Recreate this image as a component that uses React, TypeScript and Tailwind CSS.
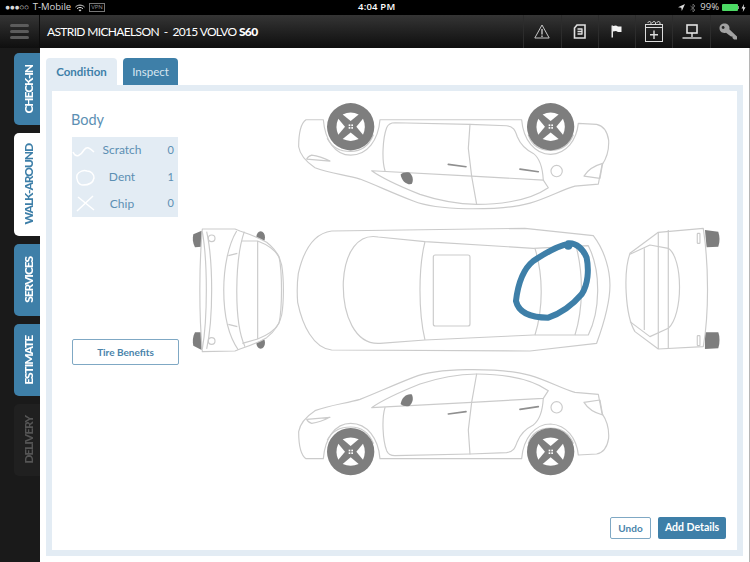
import React from "react";

const LINE = "#cbcbcb";
const GREY = "#7e7e7e";

function Wheel({ x, y }: { x: number; y: number }) {
  return (
    <g transform={`translate(${x} ${y})`}>
      <circle r="71" fill={GREY} stroke="none" />
      {[0, 90, 180, 270].map((a) => (
        <path key={a} transform={`rotate(${a})`} d="M-24 -37 Q0 -48 24 -37 L0 -17 Z" fill="#fff" stroke="none" />
      ))}
      {[-6, 2].flatMap((a) =>
        [-6, 2].map((b) => <rect key={`${a}${b}`} x={a} y={b} width="5" height="5" fill="#fff" stroke="none" />)
      )}
    </g>
  );
}

function SideCar() {
  return (
    <g fill="none" stroke={LINE} strokeWidth="3.5" strokeLinejoin="round" strokeLinecap="round">
      <path d="M130 296 L78 296 C62 285 56 250 56 215 C60 190 75 172 105 152 C150 135 200 130 240 118 C280 103 340 75 400 52 C440 36 500 30 560 29 C640 28 700 32 750 46 C800 60 850 88 885 97 L955 103 L966 160 C980 180 988 200 986 235 C982 260 970 278 950 282 L895 285 C890 235 860 195 812 192 C765 192 730 235 725 296 L300 296 C295 235 262 190 212 190 C165 190 135 235 130 296 Z" />
      <path d="M142 240 C155 215 180 201 212 201 C245 201 268 220 280 250" />
      <path d="M745 250 C755 220 780 204 812 204 C845 204 868 220 880 250" />
      <path d="M275 143 L575 127 L790 115 L805 92 C780 75 740 58 690 50 C650 43 620 42 590 42 C540 43 480 52 420 72 C370 92 310 118 275 143 Z" />
      <path d="M315 143 C305 175 308 240 320 272 C325 284 335 287 345 287 L570 282 L680 278 C700 276 705 265 712 245 C720 225 740 205 760 195 C780 180 788 150 790 115" />
      <path d="M590 42 L575 127 L565 210 L570 282" />
      <circle cx="830" cy="142" r="17" />
      <path d="M80 178 L150 172 C130 182 110 188 95 190 C88 188 82 183 80 178 Z" />
      <path d="M912 127 L960 120 L968 165 C950 160 925 148 912 127 Z" />
      <path d="M505 162 L558 155" stroke="#8f8f8f" strokeWidth="5" />
      <path d="M720 148 L775 140" stroke="#8f8f8f" strokeWidth="5" />
      <path d="M362 132 C365 112 380 100 395 103 C402 115 398 130 388 138 C378 140 368 138 362 132 Z" fill={GREY} stroke="none" />
      <Wheel x={212} y={275} />
      <Wheel x={812} y={275} />
    </g>
  );
}

function CarDiagram() {
  return (
    <svg viewBox="185 95 550 395" width="550" height="395" className="block shrink-0 blur-[0.4px]">
      <g transform="translate(280 218.4) scale(0.3333 -0.3333)">
        <SideCar />
      </g>
      <g transform="translate(280 360) scale(0.3333)">
        <SideCar />
      </g>
      <g transform="translate(185 215) scale(0.3333)" fill="none" stroke={LINE} strokeWidth="3.5" strokeLinejoin="round">
        <path d="M25 58 L50 47 L50 95 L30 97 C23 85 22 70 25 58 Z" fill={GREY} stroke="none" />
        <path d="M25 392 L50 405 L50 352 L30 352 C23 365 22 380 25 392 Z" fill={GREY} stroke="none" />
        <ellipse cx="227" cy="67" rx="13" ry="18" fill={GREY} stroke="none" />
        <ellipse cx="227" cy="383" rx="13" ry="18" fill={GREY} stroke="none" />
        <path d="M52 42 L150 42 L165 48 C195 58 225 70 245 82 C268 100 285 125 290 150 C297 190 297 260 290 300 C285 325 268 350 245 368 C225 380 195 392 165 402 L150 408 L52 410 C42 300 42 150 52 42 Z" fill="#fff" />
        <path d="M65 50 C85 140 85 310 65 402" />
        <path d="M52 50 C68 140 68 310 52 402" />
        <circle cx="80" cy="70" r="10" />
        <circle cx="80" cy="378" r="10" />
        <path d="M155 48 C105 130 100 320 160 405" />
        <path d="M178 50 C150 130 145 320 180 395" />
        <path d="M170 78 L218 78 C250 90 270 105 282 125 C292 170 292 280 282 325 C270 345 250 360 218 372 L172 385" />
        <path d="M218 78 L218 372" />
        <path d="M130 122 L157 115 M130 328 L157 335" />
        <path d="M440 48 L1020 40 L1225 62 C1262 110 1275 170 1275 210 C1275 260 1255 330 1235 385 L1035 408 L440 405 C385 400 352 330 338 262 C336 235 336 205 340 175 C355 110 385 55 440 48 Z" />
        <path d="M580 66 C520 55 480 110 475 200 C472 300 510 390 585 385 L720 375 L1045 360 L1210 360 C1245 290 1250 170 1210 92 L1045 100 L720 80 Z" />
        <path d="M720 80 C700 160 700 290 720 375" />
        <path d="M1050 100 C1075 180 1075 280 1050 360" />
        <path d="M1175 100 C1195 180 1195 280 1170 360" />
        <rect x="745" y="120" width="110" height="213" rx="6" />
        <path d="M1560 45 L1600 50 C1605 65 1605 80 1600 95 L1565 97 Z" fill={GREY} stroke="none" />
        <path d="M1560 352 L1600 352 C1605 365 1605 385 1600 400 L1560 402 Z" fill={GREY} stroke="none" />
        <path d="M1420 52 L1555 40 C1572 150 1572 300 1555 395 L1420 402 L1350 350 C1320 300 1315 170 1335 115 Z" fill="#fff" />
        <path d="M1420 52 L1420 402 M1450 45 L1450 400 M1378 100 L1378 345" />
        <path d="M1335 118 L1395 90 L1450 100 C1495 130 1495 300 1450 340 L1395 365 L1335 320" />
        <rect x="1537" y="55" width="8" height="30" rx="2" />
        <rect x="1537" y="362" width="8" height="30" rx="2" />
        <path
          d="M1155 86 C1130 88 1090 108 1045 138 C1020 158 1000 198 993 258 C1000 288 1030 308 1090 308 C1120 298 1160 273 1190 238 C1210 208 1212 163 1205 128 C1195 103 1175 83 1150 85"
          stroke="#3e7fa8"
          strokeWidth="18"
          strokeLinecap="round"
        />
        <circle cx="1150" cy="92" r="12" fill="#3e7fa8" stroke="none" />
      </g>
    </svg>
  );
}

function SideTab({ label, tone }: { label: string; tone: "blue" | "white" | "dark" }) {
  const styles =
    tone === "white"
      ? "h-[103px] bg-white text-[#3e7fa8]"
      : tone === "blue"
        ? "h-[72px] bg-[#3e7fa8] text-white"
        : "h-[72px] bg-[#202020] text-[#555555]";
  return (
    <div className={`${styles} flex w-[26px] items-center justify-center rounded-l-[5px] pl-[4px]`}>
      <span className="rotate-180 text-[12px] leading-none font-black tracking-[-1.1px] [writing-mode:vertical-rl]">
        {label}
      </span>
    </div>
  );
}

function HeaderCell({ children }: { children: React.ReactNode }) {
  return (
    <div className="flex h-full w-[37.3px] items-center justify-center border-l border-[#2c2c2c]">{children}</div>
  );
}

export default function App() {
  return (
    <div className="flex h-[562px] w-[750px] flex-col overflow-hidden bg-[#1a1a1a] font-['Lato',sans-serif]">
      <div className="relative flex h-[15px] shrink-0 items-center bg-black pr-[4px] pl-[5px] font-['Open_Sans',sans-serif] text-[9.5px] text-[#d8d8d8]">
        <span className="text-[8.5px] tracking-[-0.4px]">●●●○○</span>
        <span className="ml-[4px]">T-Mobile</span>
        <svg width="10" height="8" viewBox="0 0 10 8" className="ml-[4px]" fill="none" stroke="#ddd">
          <path d="M0.5 3 C3 0.5 7 0.5 9.5 3 M2 4.7 C4 3 6 3 8 4.7" />
          <path d="M3.5 6 L5 7.5 L6.5 6 C5.5 5.3 4.5 5.3 3.5 6 Z" fill="#ddd" stroke="none" />
        </svg>
        <span className="ml-[4px] border border-[#777] px-px text-[6px] leading-[7px] text-[#999]">VPN</span>
        <span className="absolute left-[358px] font-semibold tracking-[0.2px] text-white">4:04 PM</span>
        <div className="ml-auto flex items-center">
          <svg width="7" height="7" viewBox="0 0 7 7">
            <path d="M7 0 L0 3.2 L3.3 3.7 L3.8 7 Z" fill="#ddd" />
          </svg>
          <svg width="6" height="10" viewBox="0 0 6 10" className="ml-[5px]" fill="none" stroke="#777" strokeWidth="0.8">
            <path d="M0.5 3 L5 7 L3 9 L3 1 L5 3 L0.5 7" />
          </svg>
          <span className="ml-[4px]">99%</span>
          <div className="ml-[3px] h-[7px] w-[16px] rounded-[1px] bg-[#4cd964]" />
          <div className="h-[3px] w-px bg-[#888]" />
          <svg width="5" height="8" viewBox="0 0 5 8" className="ml-[2px]">
            <path d="M3 0 L0.5 4.5 L2.2 4.5 L1.8 8 L4.5 3.2 L2.7 3.2 Z" fill="#ddd" />
          </svg>
        </div>
      </div>

      <div className="flex h-[33px] shrink-0 items-center bg-gradient-to-b from-[#353535] to-[#0f0f0f]">
        <div className="flex h-full w-10 flex-col items-center justify-center gap-[3.5px] border-r border-[#0c0c0c] pr-[1px]">
          <div className="h-[2.5px] w-[19px] rounded-full bg-[#5c5c5c]" />
          <div className="h-[2.5px] w-[19px] rounded-full bg-[#5c5c5c]" />
          <div className="h-[2.5px] w-[19px] rounded-full bg-[#5c5c5c]" />
        </div>
        <div className="ml-[7px] text-[12px] tracking-[-0.65px] whitespace-pre text-white">
          {"ASTRID MICHAELSON  -  2015 VOLVO "}
          <span className="font-black">S60</span>
        </div>
        <div className="ml-auto flex h-full pr-[3px]">
          <HeaderCell>
            <svg width="16" height="15" viewBox="0 0 16 15" fill="none" stroke="#c8c8c8" strokeWidth="1">
              <path d="M8 1 L15.2 14 L0.8 14 Z" />
              <path d="M8 5 L8 10.5 M8 11.5 L8 13" strokeWidth="1.4" />
            </svg>
          </HeaderCell>
          <HeaderCell>
            <svg width="13" height="15" viewBox="0 0 13 15" fill="none" stroke="#e0e0e0" strokeWidth="1.6">
              <path d="M4 1 L12 1 L12 14 L1.5 14 L1.5 4 Z" />
              <path d="M4.5 5 L9.5 5 M4.5 7.5 L9.5 7.5 M4.5 10 L9.5 10 M9 5 L9 10" strokeWidth="1.3" />
            </svg>
          </HeaderCell>
          <HeaderCell>
            <svg width="11" height="13" viewBox="0 0 11 13">
              <path d="M0.5 0.5 L2 0.5 L2 12.5 L0.5 12.5 Z" fill="#e6e6e6" />
              <path d="M2 1 L5 0.5 L7 1.5 L10.5 1.5 L10.5 7 L7 7 L5 6 L2 6.5 Z" fill="#f2f2f2" />
            </svg>
          </HeaderCell>
          <HeaderCell>
            <svg width="18" height="21" viewBox="0 0 18 21" fill="none" stroke="#dcdcdc" strokeWidth="1">
              <rect x="0.5" y="3.5" width="17" height="17" />
              <path d="M0.5 6.5 L17.5 6.5" />
              <path d="M3 2 C3 0 6 0 6 2 L6 4 M7.5 2 C7.5 0 10.5 0 10.5 2 L10.5 4 M12 2 C12 0 15 0 15 2 L15 4" />
              <path d="M9 9.5 L9 18 M5 13.7 L13 13.7" strokeWidth="1.4" />
            </svg>
          </HeaderCell>
          <HeaderCell>
            <svg width="20" height="15" viewBox="0 0 20 15" fill="none" stroke="#e2e2e2">
              <rect x="5" y="1" width="10" height="8" strokeWidth="1.6" />
              <path d="M10 9 L10 13" strokeWidth="1.4" />
              <path d="M0.5 14 L19.5 14" strokeWidth="1.4" />
            </svg>
          </HeaderCell>
          <HeaderCell>
            <svg width="19" height="18" viewBox="0 0 19 18">
              <path
                d="M5.5 0.5 C8.5 0.5 10.5 2.5 10.5 5 L10.3 6.3 L18 13.5 L18 16.5 L15 16.5 L13.5 15 L13.5 13.5 L12 13.5 L7 9.7 C3.5 10.8 0.5 8.5 0.5 5.3 C0.5 2.5 2.7 0.5 5.5 0.5 Z M4 3 C3 3 2.7 4 2.7 4.6 C2.7 5.4 3.4 6 4.2 6 C5 6 5.6 5.3 5.6 4.6 C5.6 3.7 4.9 3 4 3 Z"
                fill="#a2a2a2"
                fillRule="evenodd"
              />
            </svg>
          </HeaderCell>
        </div>
      </div>

      <div className="flex min-h-0 flex-1">
        <nav className="flex w-10 shrink-0 flex-col items-end gap-2 pt-[5px]">
          <SideTab label="CHECK-IN" tone="blue" />
          <SideTab label="WALK-AROUND" tone="white" />
          <SideTab label="SERVICES" tone="blue" />
          <SideTab label="ESTIMATE" tone="blue" />
          <SideTab label="DELIVERY" tone="dark" />
        </nav>

        <main className="flex min-w-0 flex-1 flex-col border-r border-[#b5b5b5] bg-white pt-[10px] pr-[6px] pb-[6px] pl-[6px]">
          <div className="flex gap-[6px] text-[11.5px]">
            <div className="flex h-[27px] w-[71px] items-center justify-center rounded-t-[4px] bg-[#e3ecf4] pt-px font-bold text-[#3e7fa8]">
              Condition
            </div>
            <div className="flex h-[27px] w-[55px] items-center justify-center rounded-t-[4px] bg-[#3e7fa8] pt-px text-[#d8e6f0]">
              Inspect
            </div>
          </div>

          <div className="flex min-h-0 flex-1 border-[6px] border-[#e3ecf4]">
            <div className="flex w-[133px] shrink-0 flex-col pt-[19px] pl-[20px]">
              <h2 className="-ml-px h-[27px] text-[14.5px] leading-[20px] text-[#5c8fb3]">Body</h2>
              <ul className="flex h-[80px] w-[106px] flex-col bg-[#e3ecf4] text-[12px] text-[#5c8fb3]">
                <li className="flex flex-1 items-center">
                  <svg width="26" height="20" viewBox="0 0 26 20" fill="none" stroke="#fff" strokeWidth="1.5">
                    <path d="M1 12 C4 19 9 15 12 10 C15 6 18 8 22 12" />
                  </svg>
                  <span className="w-[48px] text-center">Scratch</span>
                  <span className="flex-1 pr-[4px] text-right text-[11px]">0</span>
                </li>
                <li className="flex flex-1 items-center">
                  <svg width="26" height="20" viewBox="0 0 26 20" fill="none" stroke="#fff" strokeWidth="1.5">
                    <path d="M5 8 C7 4 12 3 15 4 C19 4 22 7 22 11 C21 16 16 18 11 18 C6 18 4 12 5 8 Z" />
                  </svg>
                  <span className="w-[48px] text-center">Dent</span>
                  <span className="flex-1 pr-[4px] text-right text-[11px]">1</span>
                </li>
                <li className="flex flex-1 items-center">
                  <svg width="26" height="20" viewBox="0 0 26 20" fill="none" stroke="#fff" strokeWidth="1.5">
                    <path d="M5 17 L21 2 M6 3 L22 16" />
                  </svg>
                  <span className="w-[48px] text-center">Chip</span>
                  <span className="flex-1 pr-[4px] text-right text-[11px]">0</span>
                </li>
              </ul>
              <button className="mt-[122px] h-[26px] w-[107px] rounded-[2px] border border-[#7fa8c4] text-[10px] font-bold text-[#4a84ab]">
                Tire Benefits
              </button>
            </div>

            <div className="flex min-w-0 flex-1 flex-col pt-[4px]">
              <CarDiagram />
              <div className="mt-[27px] flex justify-end gap-[7px] pr-[11px]">
                <button className="h-[22px] w-[41px] rounded-[2px] border border-[#7fa8c4] text-[10px] font-bold text-[#4a84ab]">
                  Undo
                </button>
                <button className="h-[22px] w-[68px] rounded-[2px] bg-[#3e7fa8] text-[10.5px] font-bold text-white">
                  Add Details
                </button>
              </div>
            </div>
          </div>
        </main>
      </div>
    </div>
  );
}
